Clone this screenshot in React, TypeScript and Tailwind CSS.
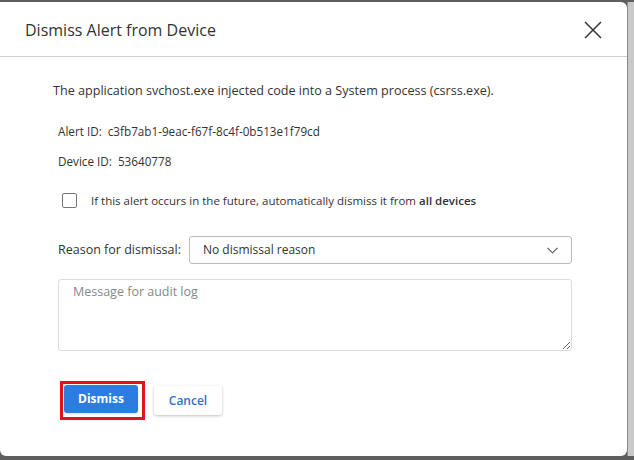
import { useState } from 'react'

const font = { fontFamily: '"Open Sans", "Noto Sans", sans-serif' }

function CloseIcon() {
    return (
        <svg width="18" height="18" viewBox="0 0 18 18" fill="none" stroke="#333" strokeWidth="1.5">
            <path d="M1 1 L17 17 M17 1 L1 17" />
        </svg>
    )
}

function Chevron() {
    return (
        <svg width="11" height="7" viewBox="0 0 11 7" fill="none" stroke="#555" strokeWidth="1.1">
            <path d="M0.5 0.8 L5.5 5.8 L10.5 0.8" />
        </svg>
    )
}

export default function App() {
    const [checked, setChecked] = useState(false)

    return (
        <div className="flex w-[634px] h-[460px] bg-[#5e5e5e] overflow-hidden" style={font}>
            <div className="mt-[2px] mb-[4px] w-[627px] bg-white rounded-r-md rounded-bl-md flex flex-col">
                {/* header */}
                <div className="h-[55px] flex items-center justify-between pl-[25px] pr-[25px] border-b border-[#cfcfcf]">
                    <span className="text-[16px] text-[#333] mt-[1px]">Dismiss Alert from Device</span>
                    <button className="flex items-center mt-[2px]"><CloseIcon /></button>
                </div>

                {/* body */}
                <div className="flex flex-col pl-[53px] pr-[55px] pt-[25px] text-[#333]">
                    <p className="text-[12.6px]">The application svchost.exe injected code into a System process (csrss.exe).</p>

                    <div className="pl-[5px] mt-[22px] flex flex-col gap-[13px] text-[11.7px]">
                        <p>Alert ID:&nbsp; c3fb7ab1-9eac-f67f-8c4f-0b513e1f79cd</p>
                        <p>Device ID:&nbsp; 53640778</p>
                    </div>

                    <label className="ml-[9px] mt-[21px] flex items-center gap-[14px] text-[11.5px] cursor-pointer">
                        <span
                            onClick={() => setChecked(!checked)}
                            className="w-[15px] h-[15px] border-[1.5px] border-[#777] rounded-[2px] bg-white"
                        ></span>
                        <span>If this alert occurs in the future, automatically dismiss it from <b className="font-semibold">all devices</b></span>
                    </label>

                    <div className="ml-[5px] mt-[27px] flex items-center gap-[8px]">
                        <span className="text-[12.5px]">Reason for dismissal:</span>
                        <div className="flex-1 h-[28px] border border-[#bbb] rounded-[3px] flex items-center justify-between pl-[13px] pr-[13px]">
                            <span className="text-[12px]">No dismissal reason</span>
                            <Chevron />
                        </div>
                    </div>

                    <div className="ml-[5px] mt-[15px]">
                        <textarea
                            placeholder="Message for audit log"
                            className="block w-full h-[72px] border border-[#ddd] rounded-[3px] px-[14px] py-[3px] text-[12.5px] placeholder:text-[#888] outline-none resize-y"
                        ></textarea>
                    </div>

                    <div className="ml-[7px] mt-[30px] flex items-center gap-[9px]">
                        <div className="border-[3px] border-[#e0141e] p-[1px] pr-[4px] pb-[4px]">
                            <button className="w-[74px] h-[28px] bg-[#2b7de0] rounded-[3px] text-white text-[12px] font-bold shadow-sm">
                                Dismiss
                            </button>
                        </div>
                        <button className="w-[68px] h-[29px] bg-white rounded-[3px] text-[#2e6fcf] text-[12px] font-semibold shadow-[0_1px_3px_rgba(0,0,0,0.25)]">
                            Cancel
                        </button>
                    </div>
                </div>
            </div>
            <div className="mt-[2px] mb-[4px] w-[7px] bg-[#c9c9c9] border-l border-[#8a8a8a]"></div>
        </div>
    )
}
